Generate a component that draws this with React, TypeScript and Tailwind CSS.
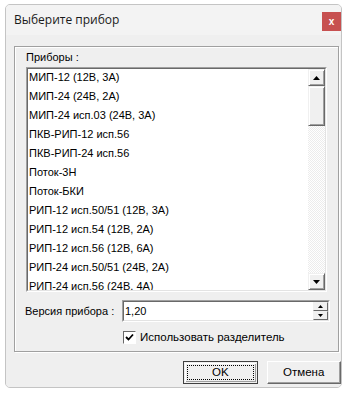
const devices = [
  "МИП-12 (12В, 3А)",
  "МИП-24 (24В, 2А)",
  "МИП-24 исп.03 (24В, 3А)",
  "ПКВ-РИП-12 исп.56",
  "ПКВ-РИП-24 исп.56",
  "Поток-3Н",
  "Поток-БКИ",
  "РИП-12 исп.50/51 (12В, 3А)",
  "РИП-12 исп.54 (12В, 2А)",
  "РИП-12 исп.56 (12В, 6А)",
  "РИП-24 исп.50/51 (24В, 2А)",
  "РИП-24 исп.56 (24В, 4А)",
];

const ui = "font-['Liberation_Sans',Arial,sans-serif]";

function Arrow({ down, small }: { down?: boolean; small?: boolean }) {
  const w = small ? 5 : 7;
  const h = small ? 3 : 4;
  return (
    <svg width={w} height={h} viewBox={`0 0 ${w} ${h}`}>
      <polygon
        points={down ? `0,0 ${w},0 ${w / 2},${h}` : `0,${h} ${w},${h} ${w / 2},0`}
        fill="#000"
      />
    </svg>
  );
}

function ScrollBtn({ down }: { down?: boolean }) {
  return (
    <div className="h-[17px] w-[17px] border border-t-[#f0f0f0] border-l-[#f0f0f0] border-b-[#696969] border-r-[#696969] bg-[#f0f0f0] shadow-[inset_1px_1px_0_#fff,inset_-1px_-1px_0_#a0a0a0] flex items-center justify-center">
      <Arrow down={down} />
    </div>
  );
}

export default function App() {
  return (
    <div className={`w-[348px] h-[393px] bg-white pt-[4px] pl-[5px] ${ui} text-black`}>
      <div className="w-[337px] h-[384px] border border-[#c4c4c4] rounded-[5px] bg-[#f0f0f0] flex flex-col overflow-hidden">
        {/* title bar */}
        <div className="h-[30px] bg-[#f3f3f3] flex justify-between">
          <span className="pl-[8px] pt-[6px] text-[12px] font-['Open_Sans',sans-serif] text-[#1a1a1a]">
            Выберите прибор
          </span>
          <div className="mt-[7px] w-[19px] h-[19px] bg-[#c75050] flex items-center justify-center text-white text-[10px] font-bold leading-none">
            x
          </div>
        </div>

        <div className="flex-1 pl-[8px] pt-[11px] bg-[#efefef]">
          {/* group box */}
          <div className="w-[325px] h-[306px] border border-[#a0a0a0] shadow-[inset_1px_1px_0_#fff,1px_1px_0_#fff] text-[11px]">
            <div className="h-[20px] pl-[11px] leading-[21px]">Приборы :</div>

            {/* list */}
            <div className="ml-[11px] w-[301px] h-[225px] border border-t-[#a0a0a0] border-l-[#a0a0a0] border-b-white border-r-white">
              <div className="h-full border border-t-[#696969] border-l-[#696969] border-b-[#e3e3e3] border-r-[#e3e3e3] bg-white flex">
                <div className="flex-1 overflow-hidden pl-[1px]">
                  {devices.map((d) => (
                    <div key={d} className="h-[19px] leading-[17px] whitespace-nowrap">
                      {d}
                    </div>
                  ))}
                </div>
                <div className="w-[17px] flex flex-col bg-[repeating-conic-gradient(#ececec_0_25%,#ffffff_0_50%)] bg-[length:2px_2px]">
                  <ScrollBtn />
                  <div className="h-[40px] w-[17px] border border-t-[#f0f0f0] border-l-[#f0f0f0] border-b-[#696969] border-r-[#696969] bg-[#f0f0f0] shadow-[inset_1px_1px_0_#fff,inset_-1px_-1px_0_#a0a0a0]" />
                  <div className="flex-1" />
                  <ScrollBtn down />
                </div>
              </div>
            </div>

            {/* version */}
            <div className="mt-[8px] flex items-center">
              <div className="w-[107px] pl-[10px]">Версия прибора :</div>
              <div className="w-[208px] h-[22px] border border-t-[#a0a0a0] border-l-[#a0a0a0] border-b-white border-r-white">
                <div className="h-full border border-t-[#696969] border-l-[#696969] border-b-[#e3e3e3] border-r-[#e3e3e3] bg-white flex items-center">
                  <span className="flex-1 pl-[1px]">1,20</span>
                  <div className="w-[15px] h-[18px] flex flex-col">
                    <div className="flex-1 bg-[#f0f0f0] border border-t-[#f0f0f0] border-l-[#f0f0f0] border-b-[#696969] border-r-[#696969] flex items-center justify-center">
                      <Arrow small />
                    </div>
                    <div className="flex-1 bg-[#f0f0f0] border border-t-[#f0f0f0] border-l-[#f0f0f0] border-b-[#696969] border-r-[#696969] flex items-center justify-center">
                      <Arrow small down />
                    </div>
                  </div>
                </div>
              </div>
            </div>

            {/* checkbox */}
            <div className="mt-[7px] ml-[108px] flex items-center gap-[4px]">
              <div className="w-[13px] h-[13px] border border-t-[#696969] border-l-[#696969] border-b-white border-r-white bg-white flex items-center justify-center">
                <svg width="9" height="9" viewBox="0 0 9 9">
                  <path d="M1 4 L3.5 6.5 L8 1.5" stroke="#000" strokeWidth="1.8" fill="none" />
                </svg>
              </div>
              <span className="text-[11.5px]">Использовать разделитель</span>
            </div>
          </div>

          {/* buttons */}
          <div className="mt-[9px] flex pl-[169px] gap-[9px] text-[11.5px]">
            <div className="w-[75px] h-[23px] border border-[#404040] p-[1px]">
              <div className="h-full bg-[#f0f0f0] shadow-[inset_1px_1px_0_#fff,inset_-1px_-1px_0_#a0a0a0] p-[2px]">
                <div className="h-full border border-dotted border-black flex items-center justify-center">OK</div>
              </div>
            </div>
            <div className="w-[75px] h-[23px] border border-t-white border-l-white border-b-[#696969] border-r-[#696969] bg-[#f0f0f0] shadow-[inset_-1px_-1px_0_#a0a0a0] flex items-center justify-center">
              Отмена
            </div>
          </div>
        </div>
      </div>
    </div>
  );
}
